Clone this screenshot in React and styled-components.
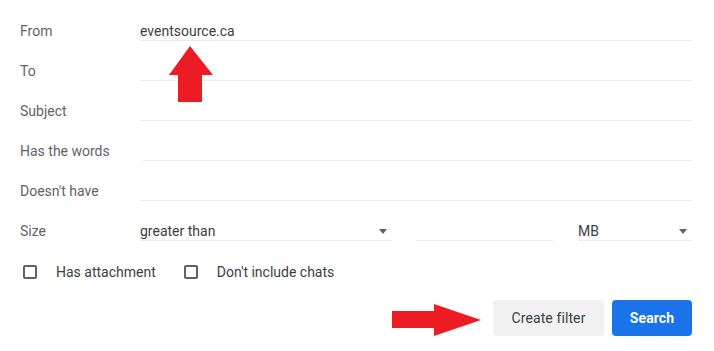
import React from 'react';
import styled, { createGlobalStyle } from 'styled-components';

const GlobalStyle = createGlobalStyle`
  body {
    margin: 0;
    background: #ffffff;
    font-family: Roboto, "Liberation Sans", Arial, sans-serif;
  }
`;

const StyledPanel = styled.div`
  position: relative;
  width: 714px;
  height: 351px;
  box-sizing: border-box;
  padding: 1px 22px 0 20px;
  background: #ffffff;
`;

const StyledRow = styled.div`
  display: flex;
  align-items: flex-end;
  height: 40px;
`;

const StyledLabel = styled.div`
  width: 120px;
  flex: none;
  font-size: 14px;
  line-height: 18px;
  color: #5f6368;
  padding-bottom: 1px;
`;

const StyledField = styled.div`
  flex: ${({ grow }) => (grow ? 1 : 'none')};
  width: ${({ width }) => (width ? `${width}px` : 'auto')};
  margin-left: ${({ offset }) => offset || 0}px;
  position: relative;
  display: flex;
  align-items: flex-end;
  height: 20px;
  border-bottom: 1px solid #e8eaed;
  font-size: 14px;
  line-height: 18px;
  color: #3c4043;
`;

const StyledCaret = styled.span`
  position: absolute;
  right: ${({ right }) => right}px;
  top: 9px;
  width: 0;
  height: 0;
  border-left: 4.5px solid transparent;
  border-right: 4.5px solid transparent;
  border-top: 5px solid #5f6368;
`;

const StyledChecks = styled.div`
  display: flex;
  align-items: center;
  height: 22px;
  margin-top: 20px;
`;

const StyledCheck = styled.label`
  display: flex;
  align-items: center;
  margin-left: 3px;
  margin-right: ${({ gap }) => gap || 0}px;
  font-size: 14px;
  color: #3c4043;
`;

const StyledBox = styled.span`
  width: 14px;
  height: 14px;
  box-sizing: border-box;
  border: 2px solid #5f6368;
  border-radius: 2px;
  margin-right: 19px;
`;

const StyledActions = styled.div`
  display: flex;
  justify-content: flex-end;
  gap: 8px;
  margin-top: 17px;
`;

const StyledButton = styled.button`
  height: 36px;
  padding: 0 16px;
  border: none;
  border-radius: 4px;
  font-family: Roboto, "Liberation Sans", Arial, sans-serif;
  font-size: 14px;
  font-weight: ${({ primary }) => (primary ? 700 : 400)};
  letter-spacing: 0.1px;
  color: ${({ primary }) => (primary ? '#ffffff' : '#3c4043')};
  background: ${({ primary }) => (primary ? '#1a73e8' : '#f1f1f1')};
  width: ${({ width }) => width}px;
`;

const StyledArrow = styled.svg`
  position: absolute;
  left: ${({ x }) => x}px;
  top: ${({ y }) => y}px;
`;

const rows = [
  { label: 'From', value: 'eventsource.ca' },
  { label: 'To' },
  { label: 'Subject' },
  { label: 'Has the words', offset: 3 },
  { label: "Doesn't have" },
];

const App = () => (
  <>
    <GlobalStyle />
    <StyledPanel>
      {rows.map((row) => (
        <StyledRow key={row.label}>
          <StyledLabel>{row.label}</StyledLabel>
          <StyledField grow offset={row.offset}>
            {row.value}
          </StyledField>
        </StyledRow>
      ))}

      <StyledRow>
        <StyledLabel>Size</StyledLabel>
        <StyledField width={252}>
          greater than
          <StyledCaret right={5} />
        </StyledField>
        <StyledField width={137} offset={24} />
        <StyledField width={114} offset={25}>
          MB
          <StyledCaret right={5} />
        </StyledField>
      </StyledRow>

      <StyledChecks>
        <StyledCheck gap={25}>
          <StyledBox />
          Has attachment
        </StyledCheck>
        <StyledCheck>
          <StyledBox />
          Don't include chats
        </StyledCheck>
      </StyledChecks>

      <StyledActions>
        <StyledButton width={111}>Create filter</StyledButton>
        <StyledButton primary width={80}>
          Search
        </StyledButton>
      </StyledActions>

      <StyledArrow x={168} y={45} width={46} height={58} viewBox="0 0 46 58">
        <polygon points="22,1 45,30 34,30 34,57 10,57 10,30 1,30" fill="#ed1c24" />
      </StyledArrow>
      <StyledArrow x={391} y={303} width={92} height={34} viewBox="0 0 92 34">
        <polygon points="1,8 43,8 43,1 90,17 43,33 43,25 1,25" fill="#ed1c24" />
      </StyledArrow>
    </StyledPanel>
  </>
);

export default App;
